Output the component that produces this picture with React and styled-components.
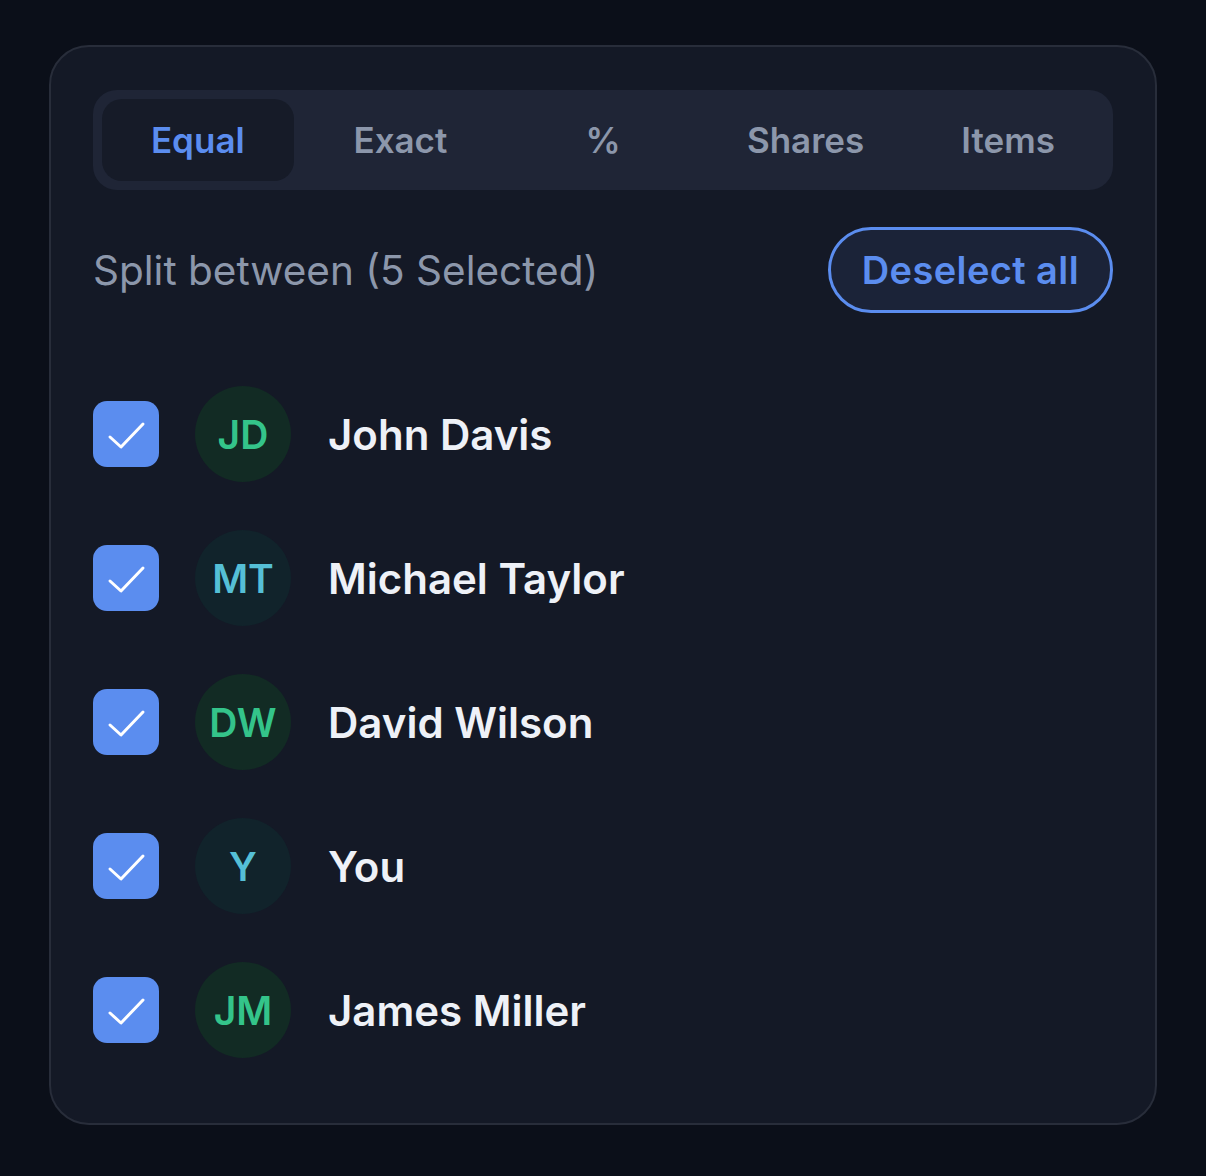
import styled, { createGlobalStyle } from 'styled-components';

const GlobalStyle = createGlobalStyle`
  html, body {
    margin: 0;
    padding: 0;
    background: #0b0f19;
    font-family: Inter, "Noto Sans", sans-serif;
  }
`;

const Page = styled.div`
  padding: 45px 49px 51px;
`;

const Card = styled.div`
  width: 1108px;
  box-sizing: border-box;
  background: #141926;
  border: 2px solid #282d3a;
  border-radius: 40px;
  padding: 43px 42px 65px;
  display: flex;
  flex-direction: column;
`;

const Tabs = styled.div`
  display: grid;
  grid-template-columns: repeat(5, 1fr);
  gap: 11px;
  height: 100px;
  box-sizing: border-box;
  padding: 9px;
  background: #1f2536;
  border-radius: 24px;
`;

const Tab = styled.button`
  border: none;
  border-radius: 20px;
  background: ${({ $active }) => ($active ? '#161b28' : 'transparent')};
  color: ${({ $active }) => ($active ? '#5b8def' : '#8c97ab')};
  font-family: inherit;
  font-size: 35px;
  font-weight: 600;
  cursor: pointer;
`;

const Header = styled.div`
  display: flex;
  align-items: center;
  justify-content: space-between;
  margin-top: 37px;
`;

const Label = styled.span`
  font-size: 40.5px;
  color: #8c97ab;
  font-weight: 400;
`;

const DeselectButton = styled.button`
  height: 86px;
  padding: 0 31px;
  border: 3px solid #5b8def;
  border-radius: 43px;
  background: #1b2338;
  color: #5b8def;
  font-family: inherit;
  font-size: 38px;
  letter-spacing: 0.4px;
  font-weight: 600;
  cursor: pointer;
`;

const List = styled.div`
  display: flex;
  flex-direction: column;
  gap: 48px;
  margin-top: 73px;
`;

const Row = styled.div`
  display: flex;
  align-items: center;
`;

const Checkbox = styled.div`
  width: 66px;
  height: 66px;
  border-radius: 14px;
  background: #5b8def;
  display: flex;
  align-items: center;
  justify-content: center;
`;

const Avatar = styled.div`
  width: 96px;
  height: 96px;
  border-radius: 50%;
  margin-left: 36px;
  background: ${({ $tone }) => ($tone === 'green' ? '#122b24' : '#11232b')};
  color: ${({ $tone }) => ($tone === 'green' ? '#34c48a' : '#55bfd6')};
  display: flex;
  align-items: center;
  justify-content: center;
  font-size: 39px;
  font-weight: 600;
`;

const Name = styled.span`
  margin-left: 37px;
  font-size: 42px;
  font-weight: 600;
  color: #eef1f7;
`;

const tabs = ['Equal', 'Exact', '%', 'Shares', 'Items'];

const people = [
  { initials: 'JD', name: 'John Davis', tone: 'green' },
  { initials: 'MT', name: 'Michael Taylor', tone: 'teal' },
  { initials: 'DW', name: 'David Wilson', tone: 'green' },
  { initials: 'Y', name: 'You', tone: 'teal' },
  { initials: 'JM', name: 'James Miller', tone: 'green' },
];

const CheckMark = () => (
  <svg width="66" height="66" viewBox="0 0 66 66" fill="none">
    <polyline points="17,36 28,46 50,23" stroke="#ffffff" strokeWidth="3" strokeLinecap="round" strokeLinejoin="round" />
  </svg>
);

export default function App() {
  return (
    <Page>
      <GlobalStyle />
      <Card>
        <Tabs>
          {tabs.map((t, i) => (
            <Tab key={t} $active={i === 0}>{t}</Tab>
          ))}
        </Tabs>
        <Header>
          <Label>Split between (5 Selected)</Label>
          <DeselectButton>Deselect all</DeselectButton>
        </Header>
        <List>
          {people.map((p) => (
            <Row key={p.name}>
              <Checkbox>
                <CheckMark />
              </Checkbox>
              <Avatar $tone={p.tone}>{p.initials}</Avatar>
              <Name>{p.name}</Name>
            </Row>
          ))}
        </List>
      </Card>
    </Page>
  );
}
